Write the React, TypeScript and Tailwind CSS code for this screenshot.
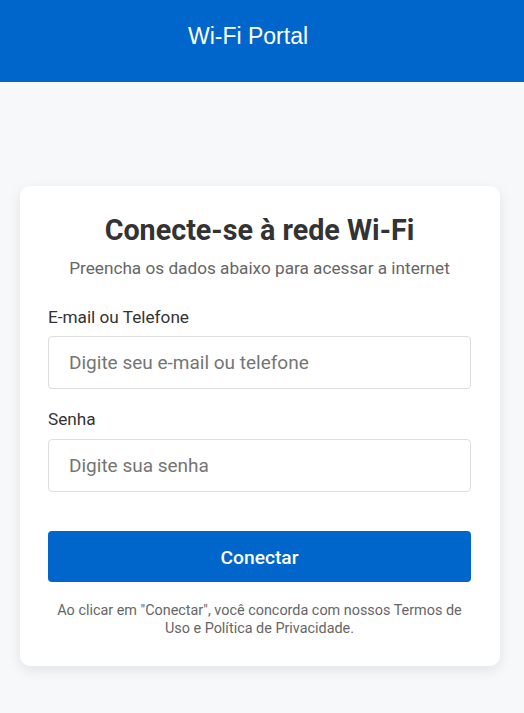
export default function App() {
  return (
    <div className="min-h-[713px] bg-[#f7f8fa] font-['Roboto',sans-serif]">
      <header className="h-[82px] bg-[#0066cc] flex items-center justify-center pr-[28px] pb-[10px]">
        <h1 className="font-['Liberation_Sans',Arial,sans-serif] text-[23px] text-white">
          Wi-Fi Portal
        </h1>
      </header>

      <main className="pt-[104px] pb-12">
        <div className="ml-[20px] w-[480px] bg-white rounded-[10px] shadow-[0_4px_14px_rgba(0,0,0,0.09)] pl-[28px] pr-[29px] pt-[27px] pb-[28px]">
          <h2 className="text-center text-[28.7px] font-bold leading-[34px] text-[#333]">
            Conecte-se à rede Wi-Fi
          </h2>
          <p className="mt-[9px] text-center text-[17.2px] leading-[24px] text-[#666]">
            Preencha os dados abaixo para acessar a internet
          </p>

          <form className="mt-[27px]" onSubmit={(e) => e.preventDefault()}>
            <label className="block text-[17.2px] leading-[20px] text-[#333] mb-[9px]">
              E-mail ou Telefone
            </label>
            <input
              type="text"
              placeholder="Digite seu e-mail ou telefone"
              className="w-full h-[53px] border border-[#ddd] rounded-[4px] px-[20px] text-[19px] placeholder:text-[#757575] outline-none"
            />

            <label className="block text-[17.2px] leading-[20px] text-[#333] mt-[20px] mb-[10px]">
              Senha
            </label>
            <input
              type="password"
              placeholder="Digite sua senha"
              className="w-full h-[53px] border border-[#ddd] rounded-[4px] px-[20px] text-[19px] placeholder:text-[#757575] outline-none"
            />

            <button
              type="submit"
              className="mt-[39px] w-full h-[51px] pt-[4px] bg-[#0066cc] text-white text-[19.2px] font-medium rounded-[4px]"
            >
              Conectar
            </button>
          </form>

          <p className="mt-[20px] text-center text-[14.4px] leading-[18px] text-[#666]">
            Ao clicar em "Conectar", você concorda com nossos Termos de Uso e
            Política de Privacidade.
          </p>
        </div>
      </main>
    </div>
  );
}
